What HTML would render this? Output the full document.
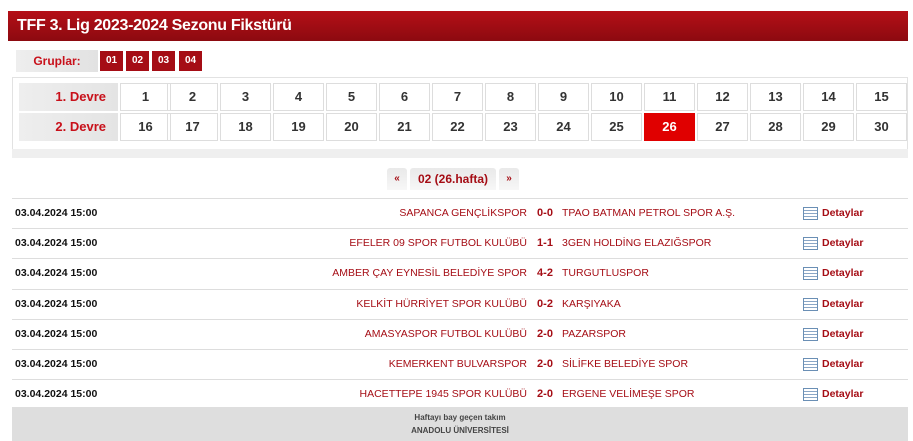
<!DOCTYPE html>
<html><head><meta charset="utf-8"><style>
*{margin:0;padding:0;box-sizing:border-box}
body{width:913px;height:441px;background:#fff;font-family:"Liberation Sans",sans-serif;position:relative;overflow:hidden}
.hdr{position:absolute;left:8px;top:11px;width:900px;height:30px;background:linear-gradient(#b50f17,#8c0a10);color:#fff;font-weight:bold;font-size:16px;line-height:30px;padding-left:9px;letter-spacing:-0.3px}
.grp{position:absolute;left:16px;top:50px;width:82px;height:22px;background:linear-gradient(90deg,#eee,#e2e2e2);color:#c8101a;font-weight:bold;font-size:12px;line-height:22px;text-align:center}
.gb{position:absolute;top:51px;width:23px;height:20px;background:#a50d15;color:#fff;font-size:10px;font-weight:bold;line-height:20px;text-align:center}
.grid{position:absolute;left:12px;top:77px;width:896px;height:73px;border:1px solid #e2e2e2;border-bottom:none}
.band{position:absolute;left:12px;top:149px;width:896px;height:9px;background:#efefef}
.lab{position:absolute;left:19px;width:99px;height:28px;background:linear-gradient(90deg,#eee,#e4e4e4);color:#c8101a;font-weight:bold;font-size:13px;line-height:28px;text-align:right;padding-right:12px}
.c{position:absolute;width:51px;height:28px;border:1px solid #ddd;color:#333;font-weight:bold;font-size:13px;line-height:26px;text-align:center}
.c.a{background:#e00000;color:#fff;border-color:#e00000}
.pg{position:absolute;top:168px;height:22px;background:linear-gradient(#e9e9e9,#f7f7f7);border-radius:3px 3px 0 0;color:#a50d15;font-weight:bold;font-size:12px;line-height:22px;text-align:center}
.row{position:absolute;left:12px;width:896px;height:30px;border-top:1px solid #ddd;font-size:11px;line-height:28px}
.d{position:absolute;left:3px;font-weight:bold;color:#111;font-size:10.5px}
.h{position:absolute;right:381px;color:#a50d15;white-space:nowrap;font-size:10.5px}
.s{position:absolute;left:523px;width:20px;text-align:center;font-weight:bold;color:#a50d15}
.aw{position:absolute;left:550px;color:#a50d15;white-space:nowrap;font-size:10.5px}
.ic{position:absolute;left:791px;top:8px;width:15px;height:13px;border:1px solid #6a8fb5;background:repeating-linear-gradient(#fff 0 2px,#8aa6c6 2px 3px)}
.dt{position:absolute;left:810px;font-weight:bold;color:#a50d15;font-size:10.5px}
.ft{position:absolute;left:12px;top:407px;width:896px;height:34px;background:#dedede;text-align:center;font-size:8px;font-weight:bold;color:#444;line-height:13px;padding-top:4px}
</style></head><body>
<div class="hdr">TFF 3. Lig 2023-2024 Sezonu Fikstürü</div>
<div class="grp">Gruplar:</div>
<div class="gb" style="left:100px">01</div><div class="gb" style="left:126px">02</div><div class="gb" style="left:152px">03</div><div class="gb" style="left:179px">04</div>
<div class="grid"></div><div class="band"></div>
<div class="lab" style="top:83px">1. Devre</div><div class="lab" style="top:113px">2. Devre</div>
<div class="c" style="left:120px;top:83px">1</div><div class="c" style="left:167px;top:83px">2</div><div class="c" style="left:220px;top:83px">3</div><div class="c" style="left:273px;top:83px">4</div><div class="c" style="left:326px;top:83px">5</div><div class="c" style="left:379px;top:83px">6</div><div class="c" style="left:432px;top:83px">7</div><div class="c" style="left:485px;top:83px">8</div><div class="c" style="left:538px;top:83px">9</div><div class="c" style="left:591px;top:83px">10</div><div class="c" style="left:644px;top:83px">11</div><div class="c" style="left:697px;top:83px">12</div><div class="c" style="left:750px;top:83px">13</div><div class="c" style="left:803px;top:83px">14</div><div class="c" style="left:856px;top:83px">15</div>
<div class="c" style="left:120px;top:113px">16</div><div class="c" style="left:167px;top:113px">17</div><div class="c" style="left:220px;top:113px">18</div><div class="c" style="left:273px;top:113px">19</div><div class="c" style="left:326px;top:113px">20</div><div class="c" style="left:379px;top:113px">21</div><div class="c" style="left:432px;top:113px">22</div><div class="c" style="left:485px;top:113px">23</div><div class="c" style="left:538px;top:113px">24</div><div class="c" style="left:591px;top:113px">25</div><div class="c a" style="left:644px;top:113px">26</div><div class="c" style="left:697px;top:113px">27</div><div class="c" style="left:750px;top:113px">28</div><div class="c" style="left:803px;top:113px">29</div><div class="c" style="left:856px;top:113px">30</div>
<div class="pg" style="left:387px;width:20px;font-size:10px">«</div>
<div class="pg" style="left:410px;width:86px">02 (26.hafta)</div>
<div class="pg" style="left:499px;width:20px;font-size:10px">»</div>

<div class="row" style="top:198px"><span class="d">03.04.2024 15:00</span><span class="h">SAPANCA GENÇLİKSPOR</span><span class="s">0-0</span><span class="aw">TPAO BATMAN PETROL SPOR A.Ş.</span><span class="ic"></span><span class="dt">Detaylar</span></div>
<div class="row" style="top:228px"><span class="d">03.04.2024 15:00</span><span class="h">EFELER 09 SPOR FUTBOL KULÜBÜ</span><span class="s">1-1</span><span class="aw">3GEN HOLDİNG ELAZIĞSPOR</span><span class="ic"></span><span class="dt">Detaylar</span></div>
<div class="row" style="top:258px"><span class="d">03.04.2024 15:00</span><span class="h">AMBER ÇAY EYNESİL BELEDİYE SPOR</span><span class="s">4-2</span><span class="aw">TURGUTLUSPOR</span><span class="ic"></span><span class="dt">Detaylar</span></div>
<div class="row" style="top:289px"><span class="d">03.04.2024 15:00</span><span class="h">KELKİT HÜRRİYET SPOR KULÜBÜ</span><span class="s">0-2</span><span class="aw">KARŞIYAKA</span><span class="ic"></span><span class="dt">Detaylar</span></div>
<div class="row" style="top:319px"><span class="d">03.04.2024 15:00</span><span class="h">AMASYASPOR FUTBOL KULÜBÜ</span><span class="s">2-0</span><span class="aw">PAZARSPOR</span><span class="ic"></span><span class="dt">Detaylar</span></div>
<div class="row" style="top:349px"><span class="d">03.04.2024 15:00</span><span class="h">KEMERKENT BULVARSPOR</span><span class="s">2-0</span><span class="aw">SİLİFKE BELEDİYE SPOR</span><span class="ic"></span><span class="dt">Detaylar</span></div>
<div class="row" style="top:379px;border-bottom:1px solid #ddd;height:31px"><span class="d">03.04.2024 15:00</span><span class="h">HACETTEPE 1945 SPOR KULÜBÜ</span><span class="s">2-0</span><span class="aw">ERGENE VELİMEŞE SPOR</span><span class="ic"></span><span class="dt">Detaylar</span></div>
<div class="ft">Haftayı bay geçen takım<br>ANADOLU ÜNİVERSİTESİ</div>
</body></html>
